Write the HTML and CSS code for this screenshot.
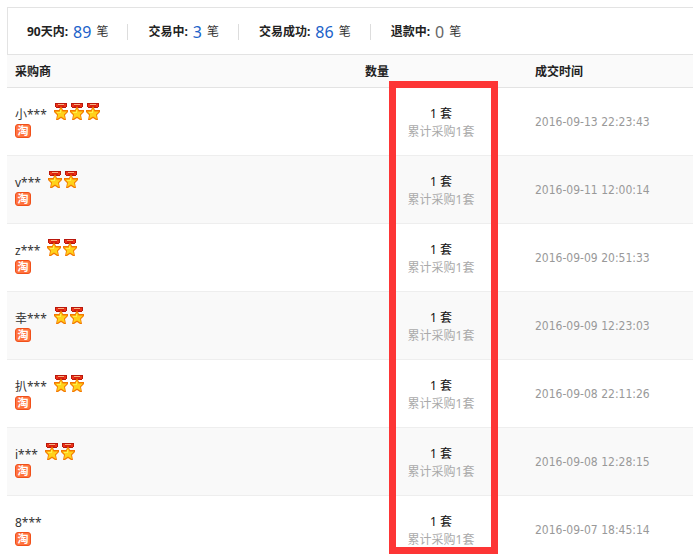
FILE: index.html
```
<!DOCTYPE html>
<html lang="zh-CN">
<head>
    <meta charset="UTF-8">
    <meta name="viewport" content="width=device-width, initial-scale=1.0">
    <title>成交记录</title>
    <link rel="stylesheet" href="styles.css">
</head>
<body>

<svg class="symbols" aria-hidden="true">
    <symbol id="medal" viewBox="0 0 16 17">
        <path d="M2 0h12v4h-1v1H3V4H2z" fill="#b8170c"/>
        <path d="M3 1h2v3H3zM11 1h2v3h-2z" fill="#ee3318"/>
        <path d="M5 1h6v1H5z" fill="#fbb080"/>
        <path d="M5 2h6v2H5z" fill="#d9200f"/>
        <path d="M8 3l2 4h5v2l-3 3 1 5h-2l-3-2-3 2H3l1-5-3-3V7h5z" fill="#f47a00"/>
        <path d="M8 5l1.500 3.500H14l-3 3 1 4.500-4-2.500L4 16l1-4.500-3-3h4.500z" fill="#ffd21c"/>
        <path d="M7 7h1v3H4V9h3z" fill="#fff04a"/>
    </symbol>
</svg>

<div class="records">
    <ul class="summary">
        <li><b>90天内:</b> <a href="#" class="num">89</a> 笔</li>
        <li><b>交易中:</b> <a href="#" class="num">3</a> 笔</li>
        <li><b>交易成功:</b> <a href="#" class="num">86</a> 笔</li>
        <li><b>退款中:</b> <span class="num none">0</span> 笔</li>
    </ul>

    <table>
        <thead>
            <tr>
                <th class="col-buyer">采购商</th>
                <th class="col-amount">数量</th>
                <th>成交时间</th>
            </tr>
        </thead>
        <tbody>
            <tr>
                <td>
                    <div class="buyer">小*** <span class="medals"><svg><use href="#medal"/></svg><svg><use href="#medal"/></svg><svg><use href="#medal"/></svg></span></div>
                    <span class="tao">淘</span>
                </td>
                <td class="amount">1 套<div class="total">累计采购1套</div></td>
                <td class="time">2016-09-13 22:23:43</td>
            </tr>
            <tr>
                <td>
                    <div class="buyer">v*** <span class="medals"><svg><use href="#medal"/></svg><svg><use href="#medal"/></svg></span></div>
                    <span class="tao">淘</span>
                </td>
                <td class="amount">1 套<div class="total">累计采购1套</div></td>
                <td class="time">2016-09-11 12:00:14</td>
            </tr>
            <tr>
                <td>
                    <div class="buyer">z*** <span class="medals"><svg><use href="#medal"/></svg><svg><use href="#medal"/></svg></span></div>
                    <span class="tao">淘</span>
                </td>
                <td class="amount">1 套<div class="total">累计采购1套</div></td>
                <td class="time">2016-09-09 20:51:33</td>
            </tr>
            <tr>
                <td>
                    <div class="buyer">幸*** <span class="medals"><svg><use href="#medal"/></svg><svg><use href="#medal"/></svg></span></div>
                    <span class="tao">淘</span>
                </td>
                <td class="amount">1 套<div class="total">累计采购1套</div></td>
                <td class="time">2016-09-09 12:23:03</td>
            </tr>
            <tr>
                <td>
                    <div class="buyer">扒*** <span class="medals"><svg><use href="#medal"/></svg><svg><use href="#medal"/></svg></span></div>
                    <span class="tao">淘</span>
                </td>
                <td class="amount">1 套<div class="total">累计采购1套</div></td>
                <td class="time">2016-09-08 22:11:26</td>
            </tr>
            <tr>
                <td>
                    <div class="buyer">i*** <span class="medals"><svg><use href="#medal"/></svg><svg><use href="#medal"/></svg></span></div>
                    <span class="tao">淘</span>
                </td>
                <td class="amount">1 套<div class="total">累计采购1套</div></td>
                <td class="time">2016-09-08 12:28:15</td>
            </tr>
            <tr>
                <td>
                    <div class="buyer">8***</div>
                    <span class="tao">淘</span>
                </td>
                <td class="amount">1 套<div class="total">累计采购1套</div></td>
                <td class="time">2016-09-07 18:45:14</td>
            </tr>
        </tbody>
    </table>

    <div class="highlight"></div>
</div>

</body>
</html>
```

FILE: styles.css
```
body {
    margin: 0;
    height: 100vh;
    overflow: hidden;
    background: #fff;
    color: #333;
    font: 12px/18px "Noto Sans", "Noto Sans CJK SC", sans-serif;
}
.symbols {
    display: none;
}
.records {
    position: relative;
    margin: 7px 0 0 7px;
}

/* order counts */
.summary {
    display: flex;
    align-items: center;
    margin: 0;
    padding: 15px 0 13px 19px;
    border: 1px solid #e3e3e3;
    border-width: 1px 0 0 1px;
    list-style: none;
}
.summary li {
    display: flex;
    align-items: center;
    gap: 5px;
    height: 18px;
    white-space: nowrap;
}
.summary li + li {
    margin-left: 19px;
}
.summary li + li::before {
    content: "";
    width: 1px;
    height: 16px;
    margin-right: 15px;
    background: #ddd;
}
.summary b {
    color: #222;
}
.num {
    color: #2062c9;
    font-size: 16px;
    text-decoration: none;
}
.none {
    color: #666;
}

/* record list */
table {
    width: 100%;
    table-layout: fixed;
    border-collapse: collapse;
}
th, td {
    padding: 0 8px;
    text-align: left;
}
th {
    height: 30px;
    padding-top: 2px;
    border-top: 1px solid #e3e3e3;
    border-bottom: 1px solid #e3e3e3;
    background: #fafafa;
    color: #222;
}
td {
    height: 67px;
    border-bottom: 1px solid #eee;
}
tbody tr:nth-child(even) {
    background: #f9f9f9;
}
.col-buyer {
    width: 334px;
}
.col-amount {
    width: 154px;
}
.buyer {
    display: flex;
    gap: 6px;
    height: 20px;
    line-height: 24px;
}
.medals {
    display: flex;
}
.medals svg {
    width: 16px;
    height: 17px;
}
.tao {
    display: block;
    box-sizing: border-box;
    width: 16px;
    height: 14px;
    margin: 1px 0 2px;
    border: 1px solid #f0501a;
    border-radius: 3px;
    background: #ff7440;
    color: #fff;
    font-size: 11px;
    font-weight: bold;
    line-height: 12px;
    text-align: center;
}
.amount {
    height: 65px;
    padding: 2px 9px 0 7px;
    color: #111;
    text-align: center;
}
.total {
    color: #aaa;
}
.time {
    color: #999;
    font-family: "DejaVu Sans Condensed", "Noto Sans", sans-serif;
}

/* frame over the amount column */
.highlight {
    position: absolute;
    top: 74px;
    left: 382px;
    box-sizing: border-box;
    width: 109px;
    height: 473px;
    border: 7px solid #fd3535;
}
```
